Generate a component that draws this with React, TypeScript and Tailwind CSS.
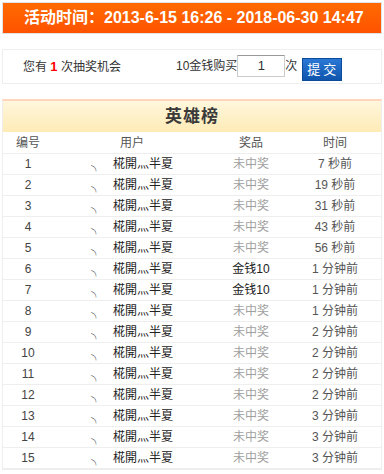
import React from "react";

const rows: { n: number; prize: string; won: boolean; time: string }[] = [
  { n: 1, prize: "未中奖", won: false, time: "7 秒前" },
  { n: 2, prize: "未中奖", won: false, time: "19 秒前" },
  { n: 3, prize: "未中奖", won: false, time: "31 秒前" },
  { n: 4, prize: "未中奖", won: false, time: "43 秒前" },
  { n: 5, prize: "未中奖", won: false, time: "56 秒前" },
  { n: 6, prize: "金钱10", won: true, time: "1 分钟前" },
  { n: 7, prize: "金钱10", won: true, time: "1 分钟前" },
  { n: 8, prize: "未中奖", won: false, time: "1 分钟前" },
  { n: 9, prize: "未中奖", won: false, time: "2 分钟前" },
  { n: 10, prize: "未中奖", won: false, time: "2 分钟前" },
  { n: 11, prize: "未中奖", won: false, time: "2 分钟前" },
  { n: 12, prize: "未中奖", won: false, time: "2 分钟前" },
  { n: 13, prize: "未中奖", won: false, time: "3 分钟前" },
  { n: 14, prize: "未中奖", won: false, time: "3 分钟前" },
  { n: 15, prize: "未中奖", won: false, time: "3 分钟前" },
];

const font = { fontFamily: '"Liberation Sans", "Noto Sans CJK SC", sans-serif' };

export default function App() {
  return (
    <div className="w-[384px] h-[474px] bg-white px-[2px] pt-[2px] text-[12px] text-[#333]" style={font}>
      <div className="h-[32px] border border-[#e3e3e3] bg-gradient-to-b from-[#ff6a00] to-[#ff5200] flex items-center pl-[21px] text-white font-bold text-[16px] leading-none">
        活动时间：2013-6-15 16:26 - 2018-06-30 14:47
      </div>
      <div className="mt-[15px] h-[35px] border border-[#eeeeee] flex items-center">
        <div className="pl-[20px] w-[173px] text-[#333] text-[12px]">
          您有 <span className="text-[#ff0000] font-bold text-[13px]">1</span> 次抽奖机会
        </div>
        <div className="flex items-center text-[12px] text-[#333] mt-[-2px]">
          <span>10金钱购买</span>
          <input
            defaultValue="1"
            className="w-[48px] h-[22px] border border-[#ccc] border-t-[#999] text-center text-[13px] outline-none"
            style={font}
          />
          <span>次</span>
          <button className="ml-[5px] mt-[7px] w-[40px] h-[23px] bg-gradient-to-b from-[#2a78d6] to-[#0f55ad] text-white text-[13px] border border-[#0c4a9a] leading-none tracking-[3px] pl-[2px]">
            提交
          </button>
        </div>
      </div>
      <div className="mt-[15px] border-l border-r border-b border-[#eeeeee] border-t-2 border-t-[#ffd5c0]">
        <div className="h-[31px] bg-gradient-to-b from-[#fff7dc] to-[#feebb6] flex items-center justify-center text-[17px] font-bold text-[#3a3a3a] tracking-[1px]">
          英雄榜
        </div>
        <div className="flex h-[22px] items-center text-[#555] text-[12px] border-b border-[#eeeeee]">
          <div className="w-[50px] text-center">编号</div>
          <div className="w-[158px] text-center">用户</div>
          <div className="w-[80px] text-center">奖品</div>
          <div className="w-[88px] text-center">时间</div>
        </div>
        {rows.map((r) => (
          <div key={r.n} className="flex h-[21px] items-center border-b border-[#eeeeee] text-[12px]">
            <div className="w-[50px] text-center text-[#444]">{r.n}</div>
            <div className="w-[158px] flex items-center">
              <span className="ml-[38px] w-[22px] text-[10px] text-[#333] mt-[4px]">╮</span>
              <span className="text-[#222]">椛開灬半夏</span>
            </div>
            <div className={"w-[80px] text-center " + (r.won ? "text-[#222]" : "text-[#a0a0a0]")}>{r.prize}</div>
            <div className="w-[88px] text-center text-[#555]">{r.time}</div>
          </div>
        ))}
      </div>
    </div>
  );
}
